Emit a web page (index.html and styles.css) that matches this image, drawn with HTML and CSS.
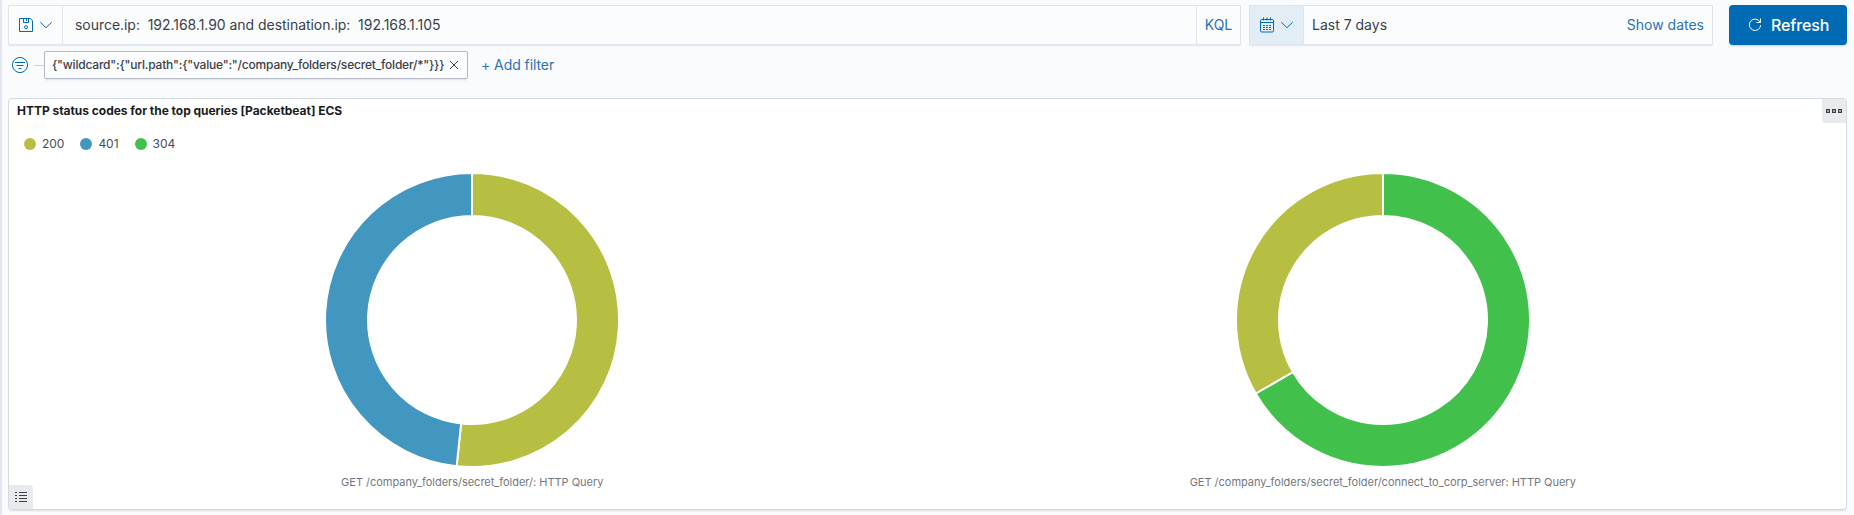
FILE: index.html
```html
<!DOCTYPE html>
<html lang="en">
<head>
<meta charset="utf-8">
<title>HTTP status codes</title>
<link rel="stylesheet" href="styles.css">
</head>
<body>
<header class="search-row">
  <div class="field query">
    <button class="prefix saved" aria-label="Saved queries">
      <svg width="16" height="16" viewBox="0 0 16 16"><path d="M1.500 1.500h10.800l2.200 2.200v10.800h-13zM5.500 1.500v4h5v-4M8.500 2v2"/><circle cx="8" cy="10.200" r="1.500"/></svg>
      <svg width="16" height="16" viewBox="0 0 16 16"><path d="M2.300 5.200 8 10.700l5.700-5.500"/></svg>
    </button>
    <div class="query-text">source.ip:&nbsp; 192.168.1.90 and destination.ip:&nbsp; 192.168.1.105</div>
    <button class="kql">KQL</button>
  </div>
  <div class="field dates">
    <button class="prefix quick" aria-label="Date quick select">
      <svg width="16" height="16" viewBox="0 0 16 16"><rect x="1.500" y="2.500" width="13" height="12.500" rx="1.200"/><path d="M1.500 5.500h13M4.500.5v3M8 .5v3M11.500.5v3"/><path stroke-dasharray="2 1" d="M4 8.500h8M4 10.500h8M4 12.500h8"/></svg>
      <svg width="16" height="16" viewBox="0 0 16 16"><path d="M2.300 5.200 8 10.700l5.700-5.500"/></svg>
    </button>
    <span class="range">Last 7 days</span>
    <button class="show-dates">Show dates</button>
  </div>
  <button class="refresh">
    <svg width="16" height="16" viewBox="0 0 16 16"><path d="M13.100 5.200A5.700 5.700 0 1 0 13.700 8.200M13.500 1.500v4h-4"/></svg>
    <span>Refresh</span>
  </button>
</header>

<div class="filter-row">
  <svg class="filter-icon" width="18" height="18" viewBox="0 0 18 18"><circle cx="9" cy="9" r="7.600"/><path d="M4 6.500h10M5.500 9.500h7M7.500 12.500h3"/></svg>
  <span class="branch"></span>
  <div class="pill"><span>{"wildcard":{"url.path":{"value":"/company_folders/secret_folder/*"}}}</span>
    <svg width="10" height="10" viewBox="0 0 10 10"><path d="m1 1 8 8M9 1 1 9"/></svg>
  </div>
  <button class="add">+ Add filter</button>
</div>

<main class="panel">
  <div class="panel-head">
    <h2>HTTP status codes for the top queries [Packetbeat] ECS</h2>
    <button class="options" aria-label="Panel options"><svg width="16" height="6" viewBox="0 0 16 6"><path d="M.6 1.600h2.800v2.800H.6zM6.600 1.600h2.800v2.800H6.600zM12.600 1.600h2.800v2.800h-2.800z"/></svg></button>
  </div>
  <ul class="legend">
    <li><i class="dot olive"></i>200</li>
    <li><i class="dot blue"></i>401</li>
    <li><i class="dot green"></i>304</li>
  </ul>
  <div class="charts">
    <figure>
      <svg width="296" height="296" viewBox="-148 -148 296 296" class="donut">
        <path class="olive" d="M0-147A147 147 0 1 1-15.370 146.190L-10.880 103.430A104 104 0 1 0 0-104Z"/>
        <path class="blue" d="M-15.370 146.190A147 147 0 0 1 0-147V-104A104 104 0 0 0-10.880 103.430Z"/>
      </svg>
      <figcaption>GET /company_folders/secret_folder/: HTTP Query</figcaption>
    </figure>
    <figure>
      <svg width="296" height="296" viewBox="-148 -148 296 296" class="donut">
        <path class="green" d="M0-147A147 147 0 1 1-127.310 73.500L-90.070 52A104 104 0 1 0 0-104Z"/>
        <path class="olive" d="M-127.310 73.500A147 147 0 0 1 0-147V-104A104 104 0 0 0-90.070 52Z"/>
      </svg>
      <figcaption>GET /company_folders/secret_folder/connect_to_corp_server: HTTP Query</figcaption>
    </figure>
  </div>
  <button class="legend-toggle" aria-label="Toggle legend"><svg width="12" height="12" viewBox="0 0 12 12"><path d="M0 1.500h2M4 1.500h8M0 4.500h2M4 4.500h8M0 7.500h2M4 7.500h8M0 10.500h2M4 10.500h8"/></svg></button>
</main>
</body>
</html>
```
FILE: styles.css
```css
* { box-sizing: border-box; }
body {
  margin: 0;
  height: 515px;
  padding: 5px 7px 0 6px;
  border-left: 2px solid #e3e6f0;
  overflow: hidden;
  background: #fafbfd;
  color: #3c3f49;
  font: 14px/20px Inter, "Liberation Sans", sans-serif;
}
button { margin: 0; padding: 0; border: 0; background: none; color: inherit; font: inherit; }
svg { display: block; flex: none; fill: none; stroke: currentColor; }
.search-row { display: flex; height: 40px; }
.field {
  display: flex;
  align-items: stretch;
  border: 1px solid #dfe3ee;
  background: #fbfcfd;
  box-shadow: 0 2px 2px -1px rgba(152, 162, 179, .25);
}
.query { width: 1233px; margin-right: 8px; }
.prefix { display: flex; align-items: center; color: #006bb4; }
.prefix svg + svg { margin-left: 4px; }
.saved { width: 54px; padding-left: 9px; border-right: 1px solid #dfe3ee; }
.query-text { flex: 1; padding: 9px 12px; letter-spacing: -.04px; white-space: nowrap; }
.kql { width: 44px; border-left: 1px solid #dfe3ee; color: #2b71b8; letter-spacing: -.07px; }
.dates { width: 464px; margin-right: 16px; align-items: center; }
.quick { align-self: stretch; width: 54px; padding-left: 9px; border-right: 1px solid #dfe3ee; background: #e2edf6; }
.range { flex: 1; padding-left: 8px; }
.show-dates { padding-right: 8px; color: #2b71b8; }
.refresh {
  display: flex;
  align-items: center;
  width: 118px;
  padding-left: 18px;
  border-radius: 4px;
  background: #006bb4;
  box-shadow: 0 2px 2px -1px rgba(54, 97, 126, .3);
  color: #fff;
  font-size: 16px;
  font-weight: 500;
  letter-spacing: -.12px;
}
.refresh span { margin-left: 8px; }
.filter-row { display: flex; align-items: center; height: 28px; margin-top: 6px; }
.filter-icon { margin-left: 3px; color: #006bb4; }
.branch { width: 10px; height: 1px; margin-left: 5px; background: #c9d3e2; }
.pill {
  display: flex;
  align-items: center;
  justify-content: space-between;
  width: 424px;
  height: 28px;
  padding: 0 8px 0 7px;
  border: 1px solid #b4bac8;
  border-radius: 2px;
  background: #fbfcfd;
  box-shadow: 0 2px 2px -1px rgba(152, 162, 179, .3);
  font-size: 12px;
  font-weight: 500;
  letter-spacing: -.2px;
  white-space: nowrap;
}
.add { margin-left: 13px; color: #2b71b8; letter-spacing: -.07px; }
.panel {
  position: relative;
  height: 412px;
  margin-top: 19px;
  border: 1px solid #d3dae6;
  border-radius: 4px;
  background: #fff;
  box-shadow: 0 2px 2px -1px rgba(152, 162, 179, .35);
}
.panel-head { display: flex; justify-content: space-between; height: 24px; }
h2 { margin: 0; padding-left: 8px; color: #1a1c21; font-size: 12px; line-height: 24px; font-weight: 700; letter-spacing: -.03px; }
.options { display: flex; align-items: center; justify-content: center; width: 24px; background: #e9eaec; border-radius: 0 3px 0 4px; }
.options svg { stroke-width: 1.200; }
.legend { display: flex; gap: 16px; margin: 11px 0 0; padding: 0 0 0 15px; list-style: none; color: #4a4d56; font-size: 12px; letter-spacing: -.03px; }
.legend li { display: flex; align-items: center; }
.dot { width: 12px; height: 12px; margin-right: 6px; border-radius: 50%; }
.dot.olive { background: #b7bf42; }
.dot.blue { background: #4197c0; }
.dot.green { background: #41c04c; }
.charts { display: flex; margin: 18px 8px 0; }
figure { flex: 1; display: flex; flex-direction: column; align-items: center; margin: 0; }
.donut { stroke: #fff; stroke-width: 2; }
.donut .olive { fill: #b7bf42; }
.donut .blue { fill: #4197c0; }
.donut .green { fill: #41c04c; }
figcaption { margin-top: 4px; color: #737780; font-size: 11px; line-height: 20px; letter-spacing: -.02px; }
.legend-toggle {
  position: absolute;
  left: 0;
  bottom: 0;
  display: flex;
  align-items: center;
  justify-content: center;
  width: 24px;
  height: 24px;
  border-radius: 0 4px 0 3px;
  background: #e9eaec;
}
```
